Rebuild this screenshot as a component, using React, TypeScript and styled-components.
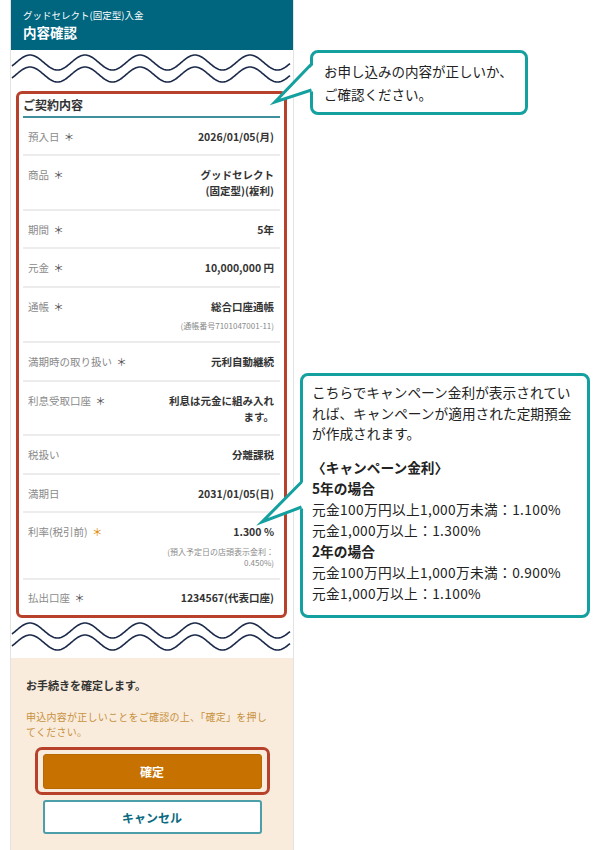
import React from 'react';
import styled, { createGlobalStyle } from 'styled-components';

const GlobalStyle = createGlobalStyle`
    html, body {
        margin: 0;
        padding: 0;
        background: #ffffff;
    }
    body {
        font-family: "Noto Sans CJK JP", "Noto Sans", sans-serif;
        color: #333333;
    }
`;

const Page = styled.div`
    position: relative;
    width: 600px;
    height: 850px;
    overflow: hidden;
    display: flex;
    padding-left: 10px;
    box-sizing: border-box;`;

const Phone = styled.div`
    width: 284px;
    height: 100%;
    display: flex;
    flex-direction: column;
    border-left: 1px solid #e3e3e3;
    border-right: 1px solid #e3e3e3;
    box-sizing: border-box;
    background: #ffffff;`;

const Header = styled.header`
    height: 50px;
    box-sizing: border-box;
    padding: 9px 12px 0;
    background: #00657e;
    color: #ffffff;`;

const HeaderSub = styled.div`
    font-size: 9.5px;
    line-height: 13px;`;

const HeaderTitle = styled.h1`
    margin: 0;
    font-size: 13.5px;
    line-height: 20px;
    font-weight: 700;`;

const WaveBand = styled.div`
    height: 40px;
    svg {
        display: block;
    }`;

const ContractBox = styled.section`
    margin: 1px 6px 0 5px;
    padding: 0 4px;
    border: 3px solid #b7412b;
    border-radius: 6px;`;

const SectionTitle = styled.h2`
    margin: 0;
    padding: 3px 0 2.5px;
    font-size: 12px;
    line-height: 16px;
    font-weight: 700;
    color: #333333;
    border-bottom: 2px solid #3f909c;`;

const Row = styled.div`
    display: flex;
    justify-content: space-between;
    align-items: flex-start;
    padding: 11px 6px 9.5px 5px;
    border-bottom: 2px solid #ececec;
    &:last-child {
        border-bottom: none;
        padding-top: 10px;
    }`;

const Label = styled.div`
    font-size: 10.5px;
    line-height: 16px;
    color: #8a8a8a;
    white-space: nowrap;`;

const Star = styled.span<{ $accent?: boolean }>`
    margin-left: 2px;
    color: ${p => (p.$accent ? '#e08a00' : '#555555')};`;

const ValueCol = styled.div`
    display: flex;
    flex-direction: column;
    align-items: flex-end;
    text-align: right;`;

const Value = styled.div`
    font-size: 10.5px;
    line-height: 16px;
    font-weight: 700;
    color: #333333;`;

const Note = styled.div<{ $lh: number; $mt: number }>`
    margin-top: ${p => p.$mt}px;
    font-size: 8px;
    line-height: ${p => p.$lh}px;
    color: #8a8a8a;`;

const ConfirmArea = styled.div`
    flex: 1;
    background: #f9ecdc;
    padding: 20px 15px 0;`;

const ConfirmTitle = styled.p`
    margin: 0;
    font-size: 11px;
    line-height: 14px;
    font-weight: 700;
    color: #333333;`;

const ConfirmNote = styled.p`
    margin: 17px 0 0;
    font-size: 10px;
    letter-spacing: 0.25px;
    line-height: 15px;
    color: #c8913f;`;

const HighlightWrap = styled.div`
    width: fit-content;
    margin: 8px auto 0;
    padding: 4px 5px 3px;
    border: 3px solid #b7412b;
    border-radius: 7px;`;

const PrimaryButton = styled.button`
    display: block;
    width: 219px;
    height: 35px;
    border: 1px solid #b86a00;
    border-radius: 3px;
    background: #c77200;
    color: #ffffff;
    font-family: inherit;
    font-size: 12px;
    font-weight: 700;`;

const CancelButton = styled.button`
    display: block;
    width: 219px;
    height: 34px;
    margin: 5px auto 0;
    border: 2px solid #4c9fa9;
    border-radius: 3px;
    background: #ffffff;
    color: #0b6a80;
    font-family: inherit;
    font-size: 12px;
    font-weight: 700;`;

const Callout = styled.div<{ $left: number; $top: number; $width: number; $height: number }>`
    position: absolute;
    left: ${p => p.$left}px;
    top: ${p => p.$top}px;
    width: ${p => p.$width}px;
    height: ${p => p.$height}px;
    box-sizing: border-box;
    border: 3px solid #13a09f;
    border-radius: 8px;
    background: #ffffff;
    color: #222222;`;

const CalloutText = styled.p<{ $pad: string; $size: number; $lh: number }>`
    margin: 0;
    padding: ${p => p.$pad};
    font-size: ${p => p.$size}px;
    line-height: ${p => p.$lh}px;
    & + & {
        padding-top: 13px;
    }`;

const Strong = styled.span`
    font-weight: 700;`;

const Rate = styled.span`
    letter-spacing: 0.35px;`;

const TailLayer = styled.svg`
    position: absolute;
    left: 0;
    top: 0;
    pointer-events: none;`;

const wavePoints = (offset: number) => {
    const pts: string[] = [];
    for (let x = 1; x <= 279; x += 1) {
        const y = offset + 7.5 - 7.5 * Math.cos((2 * Math.PI * (x - 19)) / 55);
        pts.push(`${x},${y.toFixed(2)}`);
    }
    return pts.join(' ');
};

const Wave = () => (
    <WaveBand>
        <svg width="282" height="40" viewBox="0 0 282 40">
            <polyline points={wavePoints(5)} fill="none" stroke="#1c2a4a" strokeWidth="1.6" />
            <polyline points={wavePoints(17)} fill="none" stroke="#1c2a4a" strokeWidth="1.6" />
        </svg>
    </WaveBand>
);

type RowData = {
    label: string;
    star?: boolean;
    accent?: boolean;
    value: React.ReactNode;
    note?: React.ReactNode;
    noteLh?: number;
    noteMt?: number;
};

const rows: RowData[] = [
    { label: '預入日', star: true, value: '2026/01/05(月)' },
    { label: '商品', star: true, value: <>グッドセレクト<br />(固定型)(複利)</> },
    { label: '期間', star: true, value: '5年' },
    { label: '元金', star: true, value: '10,000,000 円' },
    { label: '通帳', star: true, value: '総合口座通帳', note: '(通帳番号7101047001-11)', noteLh: 12, noteMt: 5 },
    { label: '満期時の取り扱い', star: true, value: '元利自動継続' },
    { label: '利息受取口座', star: true, value: <>利息は元金に組み入れ<br />ます。</> },
    { label: '税扱い', value: '分離課税' },
    { label: '満期日', value: '2031/01/05(日)' },
    {
        label: '利率(税引前)',
        star: true,
        accent: true,
        value: '1.300 %',
        note: <>(預入予定日の店頭表示金利：<br />0.450%)</>,
        noteLh: 11,
        noteMt: 6,
    },
    { label: '払出口座', star: true, value: '1234567(代表口座)' },
];

const App = () => {
    return (
        <Page>
            <GlobalStyle />
            <Phone>
                <Header>
                    <HeaderSub>グッドセレクト(固定型)入金</HeaderSub>
                    <HeaderTitle>内容確認</HeaderTitle>
                </Header>
                <Wave />
                <ContractBox>
                    <SectionTitle>ご契約内容</SectionTitle>
                    {rows.map(r => (
                        <Row key={r.label}>
                            <Label>
                                {r.label}
                                {r.star && <Star $accent={r.accent}> ＊</Star>}
                            </Label>
                            <ValueCol>
                                <Value>{r.value}</Value>
                                {r.note && (
                                    <Note $lh={r.noteLh ?? 12} $mt={r.noteMt ?? 5}>
                                        {r.note}
                                    </Note>
                                )}
                            </ValueCol>
                        </Row>
                    ))}
                </ContractBox>
                <Wave />
                <ConfirmArea>
                    <ConfirmTitle>お手続きを確定します。</ConfirmTitle>
                    <ConfirmNote>
                        申込内容が正しいことをご確認の上、「確定」を押し<br />てください。
                    </ConfirmNote>
                    <HighlightWrap>
                        <PrimaryButton>確定</PrimaryButton>
                    </HighlightWrap>
                    <CancelButton>キャンセル</CancelButton>
                </ConfirmArea>
            </Phone>

            <Callout $left={310} $top={50} $width={218} $height={65}>
                <CalloutText $pad="7px 0 0 11px" $size={13.5} $lh={23}>
                    お申し込みの内容が正しいか、<br />ご確認ください。
                </CalloutText>
            </Callout>

            <Callout $left={300} $top={373} $width={290} $height={245}>
                <CalloutText $pad="6px 0 0 9px" $size={13.7} $lh={20.5}>
                    こちらでキャンペーン金利が表示されてい<br />
                    れば、キャンペーンが適用された定期預金<br />
                    が作成されます。
                </CalloutText>
                <CalloutText $pad="0 0 0 9px" $size={13.7} $lh={21}>
                    <Strong>〈キャンペーン金利〉</Strong><br />
                    <Strong>5年の場合</Strong><br />
                    <Rate>元金100万円以上1,000万未満：1.100%</Rate><br />
                    <Rate>元金1,000万以上：1.300%</Rate><br />
                    <Strong>2年の場合</Strong><br />
                    <Rate>元金100万円以上1,000万未満：0.900%</Rate><br />
                    <Rate>元金1,000万以上：1.100%</Rate>
                </CalloutText>
            </Callout>

            <TailLayer width="600" height="850" viewBox="0 0 600 850">
                <polygon points="314,64 275,102 314,91" fill="#ffffff" />
                <polyline
                    points="311.5,64 275,102 311.5,90"
                    fill="none"
                    stroke="#13a09f"
                    strokeWidth="3"
                    strokeMiterlimit="10"
                />
                <polygon points="304,481 262,522 304,508" fill="#ffffff" />
                <polyline
                    points="301.5,482 262,522 301.5,507"
                    fill="none"
                    stroke="#13a09f"
                    strokeWidth="3"
                    strokeMiterlimit="10"
                />
            </TailLayer>
        </Page>
    );
};

export default App;
